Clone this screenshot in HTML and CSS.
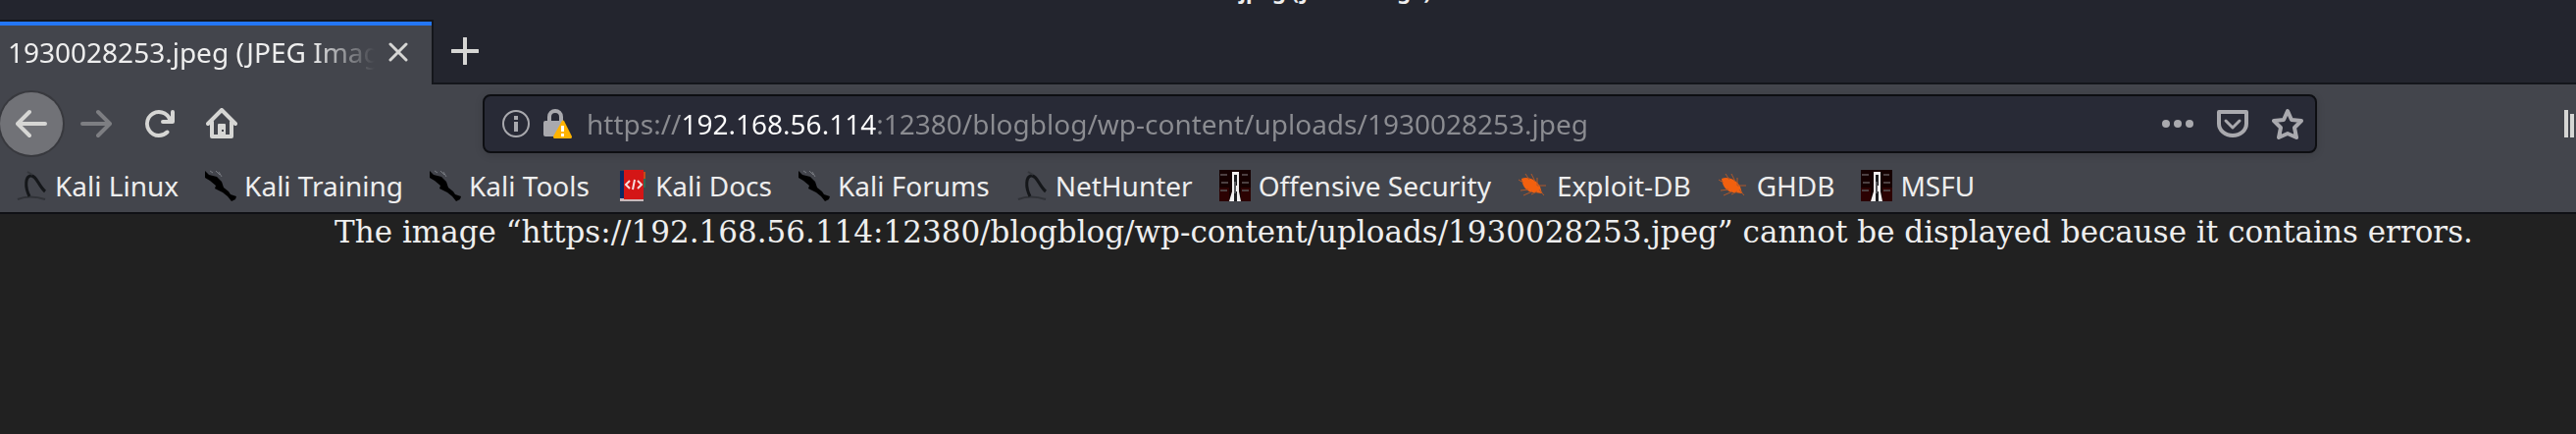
FILE: index.html
```html
<!DOCTYPE html>
<html lang="en">
<head>
<meta charset="utf-8">
<title>1930028253.jpeg (JPEG Image)</title>
<link rel="stylesheet" href="styles.css">
</head>
<body>
<svg class="sprite" aria-hidden="true">
  <symbol id="arrow" viewBox="0 0 16 16"><path d="M15 7H3.414l4.293-4.293a1 1 0 0 0-1.414-1.414l-6 6a1 1 0 0 0 0 1.414l6 6a1 1 0 0 0 1.414-1.414L3.414 9H15a1 1 0 0 0 0-2z"/></symbol>
  <symbol id="dragon" viewBox="0 0 32 32">
    <path d="M2 30Q14 25 30 30" fill="none" stroke="#303237" stroke-width="2"/>
    <path d="M14 27C9 17 10 7 15 6c6-1 8 10 15 16" fill="none" stroke="#15171a" stroke-width="3"/>
    <path d="M12 2l5 3" stroke="#34363b" stroke-width="2"/>
  </symbol>
  <symbol id="blade" viewBox="0 0 32 32">
    <path d="M0 1l4 4 8 2 5 5 2 6 5 4 2 3 6 2-1 3-4 2-4-5-5-4-8-4 1-3-6-5-5-3z" fill="#000"/>
    <path d="M5 1l3 2M11 1l4 4M14 2l3 5" stroke="#777a80" stroke-width="1" fill="none"/>
  </symbol>
  <symbol id="tower" viewBox="0 0 32 32">
    <path d="M0 0h32v32H0z" fill="#150000"/>
    <path d="M0 18h10v14H0zM22 18h10v14H22z" fill="#2c0202"/>
    <path d="M1 5h7M2 13h7M1 21h7M23 5h6M23 13h7M23 21h7" stroke="#4c4041" stroke-width="2"/>
    <path d="M13 2h7v20l2 10H10l3-10z" fill="#f2f0f0"/>
    <path d="M15 5h3v11h-3zM15 22h3v10h-3z" fill="#1c1d20"/>
    <path d="M16 12v12" stroke="#55565a" stroke-width="2"/>
  </symbol>
  <symbol id="bug" viewBox="0 0 32 32">
    <path d="M4 9c7-3 16 2 19 8l2 7-7-1C11 24 5 18 4 9z" fill="#f2600f"/>
    <path d="M1 10l5 3M8 4l4 6M14 4l4 8M20 8v8M20 16h9M3 21l8-1M6 26l9-4M14 25l6-3M22 20l5 6" stroke="#b0582a" stroke-width="1" fill="none"/>
  </symbol>
</svg>

<header class="chrome">
  <div class="titlebar"><span class="window-title">1930028253.jpeg (JPEG Image) - Mozilla Firefox</span></div>

  <div class="tabs">
    <div class="tab">
      <span class="tab-label">1930028253.jpeg (JPEG Image)</span>
      <button class="close" aria-label="Close tab"><svg viewBox="0 0 20 20"><path d="M2 2l16 16M18 2L2 18" fill="none" stroke="currentColor" stroke-width="3" stroke-linecap="round"/></svg></button>
    </div>
    <button class="new-tab" aria-label="New tab"><svg viewBox="0 0 28 28"><path d="M14 1v26M1 14h26" fill="none" stroke="currentColor" stroke-width="4" stroke-linecap="round"/></svg></button>
  </div>

  <nav class="toolbar">
    <button class="tool back" aria-label="Back"><svg class="icon"><use href="#arrow"/></svg></button>
    <button class="tool forward" aria-label="Forward" disabled><svg class="icon"><use href="#arrow"/></svg></button>
    <button class="tool" aria-label="Reload"><svg class="icon" viewBox="0 0 16 16"><path d="M15 1a1 1 0 0 0-1 1v2.418A6.995 6.995 0 1 0 8 15a6.954 6.954 0 0 0 4.95-2.05 1 1 0 0 0-1.414-1.414A5.019 5.019 0 1 1 12.549 6H10a1 1 0 0 0 0 2h5a1 1 0 0 0 1-1V2a1 1 0 0 0-1-1z"/></svg></button>
    <button class="tool" aria-label="Home"><svg class="icon" viewBox="0 0 32 32"><path d="M2 16L16 2l14 14M6 14v15h20V14" fill="none" stroke="currentColor" stroke-width="4" stroke-linecap="round" stroke-linejoin="round"/><path d="M12 29V17q0-1 1-1h6q1 0 1 1v12z"/><path d="M16 22h2v2h-2z" fill="#43454c"/></svg></button>
    <div class="urlbar">
      <button class="plain" aria-label="Site information"><svg viewBox="0 0 28 28"><circle cx="14" cy="14" r="13" fill="none" stroke="currentColor" stroke-width="2"/><path d="M12 6h4v4h-4zM12 12h4v10h-4z"/></svg></button>
      <button class="plain lock" aria-label="Connection security"><svg viewBox="0 0 30 30"><path d="M6 13V8a6 6 0 0 1 12 0v5" fill="none" stroke="currentColor" stroke-width="4"/><path d="M2 12h18v16H2q-2 0-2-2V14q0-2 2-2z"/><path d="M19 12q1-1 2 0l8 16q0 2-1 2H11q-1 0-1-2z" fill="#ffb300"/><path d="M18 17h3v6h-3zM18 25h3v3h-3z" fill="#fff"/></svg></button>
      <input class="url" type="text" aria-label="Address" spellcheck="false" value="https://192.168.56.114:12380/blogblog/wp-content/uploads/1930028253.jpeg">
      <div class="actions">
        <button class="plain" aria-label="Page actions"><svg class="icon" viewBox="0 0 32 32"><circle cx="4" cy="16" r="4"/><circle cx="16" cy="16" r="4"/><circle cx="28" cy="16" r="4"/></svg></button>
        <button class="plain" aria-label="Save to Pocket"><svg class="icon" viewBox="0 0 32 32"><path d="M2 4h28v12a14 12 0 0 1-28 0z" fill="none" stroke="currentColor" stroke-width="4" stroke-linejoin="round"/><path d="M9 13l7 7 7-7" fill="none" stroke="currentColor" stroke-width="3" stroke-linecap="round" stroke-linejoin="round"/></svg></button>
        <button class="plain" aria-label="Bookmark this page"><svg class="icon" viewBox="0 0 32 32"><path d="M16 3l4 9 10 1-7 7 2 10-9-4-9 4 2-10-7-7 10-1z" fill="none" stroke="currentColor" stroke-width="4" stroke-linejoin="round"/></svg></button>
      </div>
    </div>
    <button class="plain library" aria-label="Library"><svg viewBox="0 0 12 28"><path d="M0 0h4v28H0zM6 4h4v24H6z"/></svg></button>
  </nav>

  <nav class="bookmarks">
    <a href="#"><svg class="icon"><use href="#dragon"/></svg>Kali Linux</a>
    <a href="#"><svg class="icon"><use href="#blade"/></svg>Kali Training</a>
    <a href="#"><svg class="icon"><use href="#blade"/></svg>Kali Tools</a>
    <a href="#"><svg class="icon" viewBox="0 0 32 32"><path d="M4 28h24v4H4z" fill="#c9b9bb"/><path d="M4 1h6v28H4z" fill="#0c2a63"/><path d="M8 0h20v30H8z" fill="#d41616"/><path d="M28 2h2v7h-2z" fill="#c44a18"/><path d="M28 9h2v9h-2z" fill="#2d6b55"/><path d="M14 11l-4 4 4 4M22 11l4 4-4 4M19 10l-2 10" fill="none" stroke="#f6dede" stroke-width="2"/></svg>Kali Docs</a>
    <a href="#"><svg class="icon"><use href="#blade"/></svg>Kali Forums</a>
    <a href="#"><svg class="icon"><use href="#dragon"/></svg>NetHunter</a>
    <a href="#"><svg class="icon"><use href="#tower"/></svg>Offensive Security</a>
    <a href="#"><svg class="icon"><use href="#bug"/></svg>Exploit-DB</a>
    <a href="#"><svg class="icon"><use href="#bug"/></svg>GHDB</a>
    <a href="#"><svg class="icon"><use href="#tower"/></svg>MSFU</a>
  </nav>
</header>

<main class="page">
  <p class="message">The image “https://192.168.56.114:12380/blogblog/wp-content/uploads/1930028253.jpeg” cannot be displayed because it contains errors.</p>
</main>
</body>
</html>
```

FILE: styles.css
```css
* { box-sizing: border-box; }

body {
  margin: 0;
  min-height: 100vh;
  background: #212121;
  color: #eee;
  font-family: "Noto Sans", sans-serif;
  font-size: 28px;
  overflow: hidden;
}

button {
  display: flex;
  align-items: center;
  justify-content: center;
  padding: 0;
  border: 0;
  background: none;
  color: inherit;
  flex: none;
}

svg { fill: currentColor; flex: none; }
.sprite { display: none; }
.icon { width: 32px; height: 32px; }

.chrome {
  background: #43454c;
  border-bottom: 2px solid #101115;
}

.titlebar {
  display: flex;
  align-items: flex-end;
  justify-content: center;
  height: 20px;
  padding-left: 142px;
  overflow: hidden;
  background: #23252e;
}
.window-title {
  margin-bottom: 15px;
  line-height: 30px;
  font-size: 22px;
  font-weight: 700;
  white-space: nowrap;
}

.tabs {
  display: flex;
  height: 66px;
  background: #23252e;
  border-bottom: 2px solid #14161b;
}
.tab {
  display: flex;
  align-items: center;
  width: 442px;
  height: 66px;
  padding: 0 24px 2px 8px;
  gap: 14px;
  background: #43454c;
  border-top: 2px solid #14161b;
  border-right: 2px solid #14161b;
  box-shadow: inset 0 4px #2376f5;
}
.tab-label {
  flex: 1;
  overflow: hidden;
  white-space: nowrap;
  mask-image: linear-gradient(to left, transparent, #000 64px);
}
.close svg { width: 20px; height: 20px; color: #d6d6d4; }
.new-tab { width: 64px; height: 64px; color: #d6d6d4; }
.new-tab svg { width: 28px; height: 28px; }

.toolbar {
  display: flex;
  align-items: center;
  height: 80px;
  color: #d6d6d4;
}
.tool { width: 64px; height: 64px; }
.back {
  border-radius: 50%;
  background: #717277;
  box-shadow: 0 0 0 2px #38393e;
}
.forward { margin-left: 2px; color: #7d7e82; }
.forward svg { transform: scaleX(-1); }

.urlbar {
  display: flex;
  align-items: center;
  flex: 1;
  height: 60px;
  margin: 0 252px 0 234px;
  padding: 0 12px 0 18px;
  border: 2px solid #0d0e12;
  border-radius: 8px;
  background: #282a36;
  color: #a9a9ae;
  box-shadow: 0 2px 8px #00000022;
}
.urlbar > .plain svg { width: 28px; height: 28px; }
.urlbar > .lock { margin-left: 14px; }
.urlbar > .lock svg { width: 30px; height: 30px; }
.url {
  flex: 1;
  min-width: 0;
  margin-left: 14px;
  padding: 0;
  border: 0;
  outline: 0;
  font: inherit;
  color: transparent;
  background: linear-gradient(90deg, #8b8c91 96px, #fff 96px, #fff 295px, #8b8c91 295px);
  -webkit-background-clip: text;
  background-clip: text;
}
.actions { display: flex; gap: 24px; }
.library svg { width: 12px; height: 28px; }

.bookmarks {
  display: flex;
  align-items: center;
  height: 50px;
  padding: 0 16px 4px;
  gap: 27px;
}
.bookmarks a {
  display: flex;
  align-items: center;
  gap: 8px;
  color: #eee;
  text-decoration: none;
  white-space: nowrap;
}

.page { padding-left: 236px; }
.message {
  margin: 0;
  font-family: "DejaVu Serif", serif;
  font-size: 31px;
  line-height: 37px;
  text-align: center;
  white-space: nowrap;
}
```
